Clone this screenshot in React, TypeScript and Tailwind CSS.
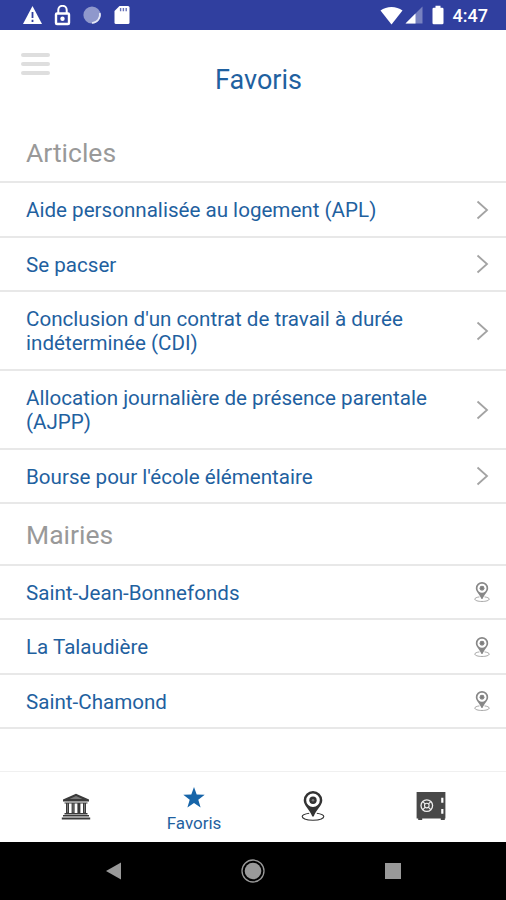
import React from "react";
import clsx from "clsx";

type IconProps = { className?: string };

const articles = [
  { title: "Aide personnalisée au logement (APL)", height: "h-[55px]" },
  { title: "Se pacser", height: "h-[54px]" },
  {
    title: "Conclusion d'un contrat de travail à durée indéterminée (CDI)",
    height: "h-[79px]",
  },
  {
    title: "Allocation journalière de présence parentale (AJPP)",
    height: "h-[79px]",
  },
  { title: "Bourse pour l'école élémentaire", height: "h-[54px]" },
];

const townHalls = [
  { title: "Saint-Jean-Bonnefonds", height: "h-[54px]" },
  { title: "La Talaudière", height: "h-[55px]" },
  { title: "Saint-Chamond", height: "h-[54px]" },
];

const Chevron = () => (
  <svg width="14" height="20" viewBox="0 0 14 20" fill="none">
    <path d="M1.500 1.500 11 10 1.500 18.500" stroke="#a3a3a3" strokeWidth="1.8" />
  </svg>
);

const PinIcon = ({ className }: IconProps) => (
  <svg className={className} viewBox="0 0 24 30" fill="none" stroke="currentColor">
    <path
      d="M8.2 22.3C4 22.9 1.2 24.1 1.2 25.6c0 2.1 4.8 3.6 10.8 3.6s10.8-1.5 10.8-3.6c0-1.5-2.8-2.7-7-3.3"
      strokeWidth="1.1"
    />
    <path
      fillRule="evenodd"
      d="M12 0a9.3 9.3 0 0 0-9.3 9.3c0 5.4 6.1 9.2 8.6 16.2h1.4c2.5-7 8.6-10.8 8.6-16.2A9.3 9.3 0 0 0 12 0Zm0 2.5a6.8 6.8 0 1 1 0 13.6 6.8 6.8 0 0 1 0-13.6Z"
      fill="currentColor"
      stroke="none"
    />
    <circle cx="12" cy="9.3" r="3.7" fill="currentColor" stroke="none" />
    <circle cx="12" cy="9.3" r="1.3" fill="#777" stroke="none" />
  </svg>
);

const BankIcon = () => (
  <svg width="30" height="27" viewBox="0 0 30 27" fill="#3a3a3a">
    <path d="M15 .8 28 6.5v2H2v-2L15 .8Z" />
    <path d="M15 3 21.5 6h-13L15 3Z" fill="#777" />
    <path d="M3.5 9.5h23v1h-23zM3.5 20h23v1.5h-23zM2 22h26v1.6H2zM.8 24.4h28.4v2H.8z" />
    <path d="M5 10h3v10.5H5zM10.6 10h3v10.5h-3zM16.4 10h3v10.5h-3zM22 10h3v10.5h-3z" />
    <path
      d="M6.5 10.5v9M12.1 10.5v9M23.5 10.5v9"
      stroke="#8a8a8a"
      strokeWidth=".8"
    />
  </svg>
);

const SafeIcon = () => (
  <svg width="30" height="30" viewBox="0 0 30 30">
    <path d="M.6 1h28.8v26.5h-.6V29h-4v-1.5H6.2V29h-4v-1.5H.6z" fill="#484848" />
    <g stroke="#eee" fill="none">
      <circle cx="10.8" cy="14.6" r="5.8" strokeWidth="1.3" />
      <circle cx="10.8" cy="14.6" r="2.3" strokeWidth="1.1" />
      <path
        d="m6.8 10.600 2.300 2.300m3.400 3.400 2.300 2.300m0-8-2.300 2.300m-3.400 3.400-2.300 2.300"
        strokeWidth="1.2"
      />
    </g>
    <path d="M25.2 6.8h2.2v5h-2.2zM25.2 18h2.2v4.8h-2.2z" fill="#fff" />
  </svg>
);

const StatusBar = () => (
  <div className="flex h-[30px] shrink-0 items-center justify-between bg-[#303f9f] pr-[18px] pl-[22px] text-white">
    <div className="flex items-center gap-[11px]">
      <svg width="21" height="20" viewBox="0 0 21 20">
        <path d="M10.5 1 20 19H1L10.5 1Z" fill="#fff" />
        <path d="M10.5 7v6m0 1.8v2.2" stroke="#303f9f" strokeWidth="1.8" />
      </svg>
      <svg width="17" height="21" viewBox="0 0 17 21" fill="none">
        <path d="M4.3 8V5a4 4 0 0 1 8.4 0v3" stroke="#fff" strokeWidth="2" />
        <rect x="2" y="8.5" width="13" height="10.5" rx="1" stroke="#fff" strokeWidth="2.4" />
        <circle cx="8.5" cy="13.7" r="2.2" fill="#fff" />
      </svg>
      <svg width="20" height="20" viewBox="0 0 20 20">
        <circle cx="10" cy="10" r="8.6" fill="#8f98cc" />
        <path d="M17.8 8A8.3 8.3 0 0 1 10 18" stroke="#e5e8f6" strokeWidth="1.7" fill="none" />
      </svg>
      <svg width="17" height="20" viewBox="0 0 17 20">
        <path d="M6.5 1H15a1.5 1.5 0 0 1 1.5 1.5v15A1.5 1.5 0 0 1 15 19H3a1.5 1.5 0 0 1-1.5-1.5V6l5-5Z" fill="#fff" />
        <path d="M7.6 3v3.2M10.4 3v3.2M13.2 3v3.2" stroke="#6872b8" strokeWidth="1.4" />
      </svg>
    </div>
    <div className="flex items-center">
      <svg width="23" height="19" viewBox="0 0 23 19">
        <path d="M11.5 18.5.5 4.5c6-4.7 16-4.7 22 0l-11 14Z" fill="#fff" />
      </svg>
      <svg className="ml-[2px]" width="18" height="18" viewBox="0 0 18 18">
        <path d="M17.5.5v17H.5z" fill="#7882c0" />
        <path d="M10.5 7.5v10H.5z" fill="#fff" />
      </svg>
      <svg className="ml-[9px]" width="12" height="20" viewBox="0 0 12 20">
        <path d="M3.5.8h5v2h1.7a1.3 1.3 0 0 1 1.3 1.3v13.8a1.3 1.3 0 0 1-1.3 1.3H1.8a1.3 1.3 0 0 1-1.3-1.3V4.1a1.3 1.3 0 0 1 1.3-1.3h1.7z" fill="#fff" />
      </svg>
      <span className="ml-[9px] pt-[2px] text-[18px] leading-none font-medium">4:47</span>
    </div>
  </div>
);

const Section = ({ title, className }: { title: string; className: string }) => (
  <h2
    className={clsx(
      "flex items-center border-b-2 border-[#e8e8e8] pl-[26px] text-[26.5px] text-[#999]",
      className
    )}
  >
    {title}
  </h2>
);

const Row = ({
  title,
  height,
  children,
}: {
  title: string;
  height: string;
  children: React.ReactNode;
}) => (
  <li
    className={clsx(
      "flex items-center justify-between border-b-2 border-[#e8e8e8] pr-[16px] pl-[26px]",
      height
    )}
  >
    <span className="w-[415px] pt-[1px] text-[20.6px] leading-[24px] text-[#1f61a0]">
      {title}
    </span>
    {children}
  </li>
);

const App = () => {
  return (
    <div className="flex h-[900px] w-[506px] flex-col overflow-hidden bg-white font-['Roboto',sans-serif]">
      <StatusBar />

      <header className="grid h-[94px] shrink-0 grid-cols-[1fr_auto_1fr] pt-[23px]">
        <div className="ml-[21px] flex w-[29px] flex-col gap-[5px]">
          <span className="h-[4px] rounded-full bg-[#dedede]" />
          <span className="h-[4px] rounded-full bg-[#dedede]" />
          <span className="h-[4px] rounded-full bg-[#dedede]" />
        </div>
        <h1 className="pt-[9px] pl-[11px] text-[27px] leading-[36px] text-[#1f61a0]">
          Favoris
        </h1>
      </header>

      <main className="flex-1">
        <Section title="Articles" className="h-[59px]" />
        <ul>
          {articles.map((item) => (
            <Row key={item.title} {...item}>
              <Chevron />
            </Row>
          ))}
        </ul>
        <Section title="Mairies" className="h-[62px] pt-[2px]" />
        <ul>
          {townHalls.map((item) => (
            <Row key={item.title} {...item}>
              <PinIcon className="h-[20px] w-[16px] text-[#888]" />
            </Row>
          ))}
        </ul>
      </main>

      <nav className="grid h-[71px] shrink-0 grid-cols-[135px_118px_119px_1fr] items-center justify-items-center border-t border-[#f0f0f0] pb-[2px]">
        <div className="pl-[16px]">
          <BankIcon />
        </div>
        <div className="flex flex-col items-center pt-[7px] text-[#1f61a0]">
          <svg width="22" height="21" viewBox="0 0 22 21">
            <path d="m11 0 2.7 7.6 8 .2-6.4 4.9 2.3 7.8L11 15.9l-6.6 4.6 2.3-7.8L.3 7.8l8-.2L11 0Z" fill="#1765a9" />
          </svg>
          <span className="mt-[5px] text-[17px] leading-[20px]">Favoris</span>
        </div>
        <PinIcon className="h-[30px] w-[24px] text-[#333]" />
        <div className="pr-[16px]">
          <SafeIcon />
        </div>
      </nav>

      <footer className="grid h-[58px] shrink-0 grid-cols-3 items-center bg-black">
        <svg className="ml-[105px]" width="17" height="18" viewBox="0 0 17 18">
          <path d="M16 .5v17L1 9z" fill="#999" />
        </svg>
        <svg className="justify-self-center" width="24" height="24" viewBox="0 0 24 24">
          <circle cx="12" cy="12" r="11" stroke="#999" strokeWidth="1.3" fill="none" />
          <circle cx="12" cy="12" r="8.3" fill="#999" />
        </svg>
        <div className="ml-[48px] size-[16px] bg-[#999]" />
      </footer>
    </div>
  );
};

export default App;
